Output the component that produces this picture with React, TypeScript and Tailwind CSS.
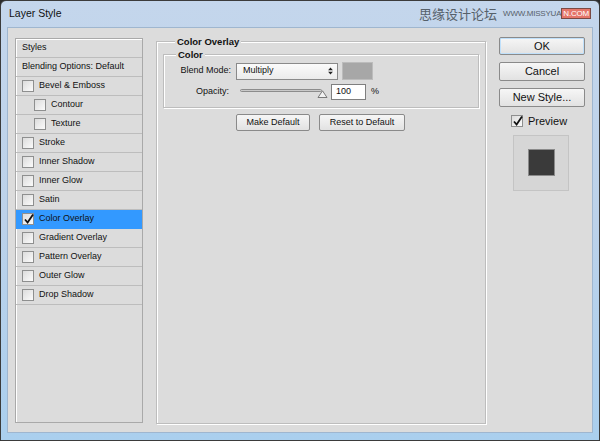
import React from "react";

const FONT = { fontFamily: '"Liberation Sans", Arial, sans-serif' };

const rows: { label: string; indent?: boolean; active?: boolean }[] = [
  { label: "Bevel & Emboss" },
  { label: "Contour", indent: true },
  { label: "Texture", indent: true },
  { label: "Stroke" },
  { label: "Inner Shadow" },
  { label: "Inner Glow" },
  { label: "Satin" },
  { label: "Color Overlay", active: true },
  { label: "Gradient Overlay" },
  { label: "Pattern Overlay" },
  { label: "Outer Glow" },
  { label: "Drop Shadow" },
];

function Box({ checked }: { checked?: boolean }) {
  return (
    <span className="relative w-[12px] h-[12px] shrink-0 border border-[#8e8f8f] bg-gradient-to-br from-[#dcdcdc] to-[#fbfbfb]">
      {checked && (
        <svg viewBox="0 0 12 12" className="absolute left-[0px] top-[-1px] w-[12px] h-[12px]">
          <path d="M2 6.5 L4.6 9.5 L10 1.5" fill="none" stroke="#111" strokeWidth="1.8" />
        </svg>
      )}
    </span>
  );
}

function Btn({ children, className = "" }: { children: React.ReactNode; className?: string }) {
  return (
    <div
      className={`flex items-center justify-center border border-[#8a8a8a] rounded-[2px] bg-gradient-to-b from-[#f6f6f6] to-[#e2e2e2] text-[#111] ${className}`}
    >
      {children}
    </div>
  );
}

export default function App() {
  return (
    <div style={FONT} className="w-[600px] h-[441px] overflow-hidden bg-[#2b2b2b]">
      <div className="w-[600px] h-[441px] rounded-t-[6px] border border-[#3b3b3b] bg-gradient-to-b from-[#c4d6ec] via-[#bcd2ea] to-[#aacfee] flex flex-col">
        {/* title bar */}
        <div className="h-[26px] flex items-center pl-[8px] pr-[8px]">
          <span className="text-[10.5px] text-[#111]">Layer Style</span>
          <div className="ml-auto flex items-center gap-[6px]">
            <span
              className="text-[13px] text-[#56606a]"
              style={{ fontFamily: '"Noto Sans CJK SC", sans-serif' }}
            >
              思缘设计论坛
            </span>
            <span className="text-[8px] text-[#56606a] tracking-tight">
              WWW.MISSYUA<span className="bg-[#e5766a] text-[#fff] px-[1px] border border-[#7a4a44]">N.COM</span>
            </span>
          </div>
        </div>

        {/* client */}
        <div className="flex-1 mx-[6px] mb-[7px] bg-[#dcdcdc] border border-[#9fb6cf] flex text-[9px] text-[#111]">
          {/* left styles list */}
          <div className="ml-[7px] mt-[10px] mb-[9px] w-[128px] border border-[#a9a9a9] shadow-[inset_1px_1px_0_#fff] flex flex-col">
            <div className="h-[19px] flex items-center pl-[6px] border-b border-[#bdbdbd]">Styles</div>
            <div className="h-[19px] flex items-center pl-[6px] border-b border-[#bdbdbd]">Blending Options: Default</div>
            {rows.map((r) => (
              <div
                key={r.label}
                className={`h-[19px] flex items-center gap-[5px] border-b ${
                  r.active ? "bg-[#3399ff] border-[#3399ff]" : "border-[#bdbdbd]"
                } ${r.indent ? "pl-[18px]" : "pl-[6px]"}`}
              >
                <Box checked={r.active} />
                <span>{r.label}</span>
              </div>
            ))}
          </div>

          {/* middle */}
          <div className="ml-[13px] mt-[13px] mb-[8px] w-[330px] relative border border-[#bdbdbd] shadow-[inset_1px_1px_0_#fff,1px_1px_0_#fff]">
            <span className="absolute left-[18px] top-[-7px] px-[2px] bg-[#dcdcdc] font-bold text-[9.5px]">Color Overlay</span>
            <div className="mt-[12px] ml-[6px] mr-[6px] h-[54px] relative border border-[#bdbdbd] shadow-[inset_1px_1px_0_#fff,1px_1px_0_#fff]">
              <span className="absolute left-[12px] top-[-7px] px-[2px] bg-[#dcdcdc] font-bold text-[9.5px]">Color</span>
              <div className="mt-[7px] flex items-center">
                <span className="w-[67px] text-right">Blend Mode:</span>
                <div className="ml-[5px] w-[102px] h-[17px] bg-gradient-to-b from-[#fbfbfb] to-[#ebebeb] border border-[#8a8a8a] flex items-center pl-[6px] pr-[4px]">
                  <span>Multiply</span>
                  <svg viewBox="0 0 6 10" className="ml-auto w-[5px] h-[8px]">
                    <path d="M0 4 L3 0.5 L6 4 Z M0 6 L3 9.5 L6 6 Z" fill="#222" />
                  </svg>
                </div>
                <div className="ml-[4px] w-[31px] h-[18px] bg-[#a7a7a7] border border-[#bcbcbc]" />
              </div>
              <div className="mt-[4px] flex items-center">
                <span className="w-[65px] text-right">Opacity:</span>
                <div className="ml-[11px] w-[86px] relative h-[16px]">
                  <div className="absolute left-0 right-[4px] top-[5px] h-[3px] rounded-[2px] border border-[#8c8c8c] bg-[#c9c9c9]" />
                  <svg viewBox="0 0 10 8" className="absolute right-[-2px] top-[6px] w-[11px] h-[8px]">
                    <path d="M0.5 7.5 L5 0.8 L9.5 7.5 Z" fill="#f2f2f2" stroke="#6c6c6c" strokeWidth="0.9" />
                  </svg>
                </div>
                <div className="ml-[5px] w-[35px] h-[16px] bg-white border border-[#7f7f7f] flex items-center pl-[4px]">100</div>
                <span className="ml-[5px]">%</span>
              </div>
            </div>
            <div className="mt-[6px] flex gap-[9px] pl-[79px]">
              <Btn className="w-[74px] h-[17px]">Make Default</Btn>
              <Btn className="w-[86px] h-[17px]">Reset to Default</Btn>
            </div>
          </div>

          {/* right */}
          <div className="ml-[13px] mt-[9px] w-[86px] flex flex-col text-[11px]">
            <Btn className="h-[18px] border-[#5a8bbf] shadow-[inset_0_0_0_1px_#bfe0fb]">OK</Btn>
            <Btn className="mt-[7px] h-[19px]">Cancel</Btn>
            <Btn className="mt-[7px] h-[19px]">New Style...</Btn>
            <div className="mt-[6px] ml-[12px] flex items-center gap-[5px]">
              <Box checked />
              <span className="text-[11px]">Preview</span>
            </div>
            <div className="mt-[5px] ml-[14px] w-[56px] h-[56px] border border-[#c4c4c4] bg-[#d6d6d6] flex items-center justify-center">
              <div className="w-[27px] h-[27px] bg-[#3a3a3a] border border-[#8a8a8a]" />
            </div>
          </div>
        </div>
      </div>
    </div>
  );
}
